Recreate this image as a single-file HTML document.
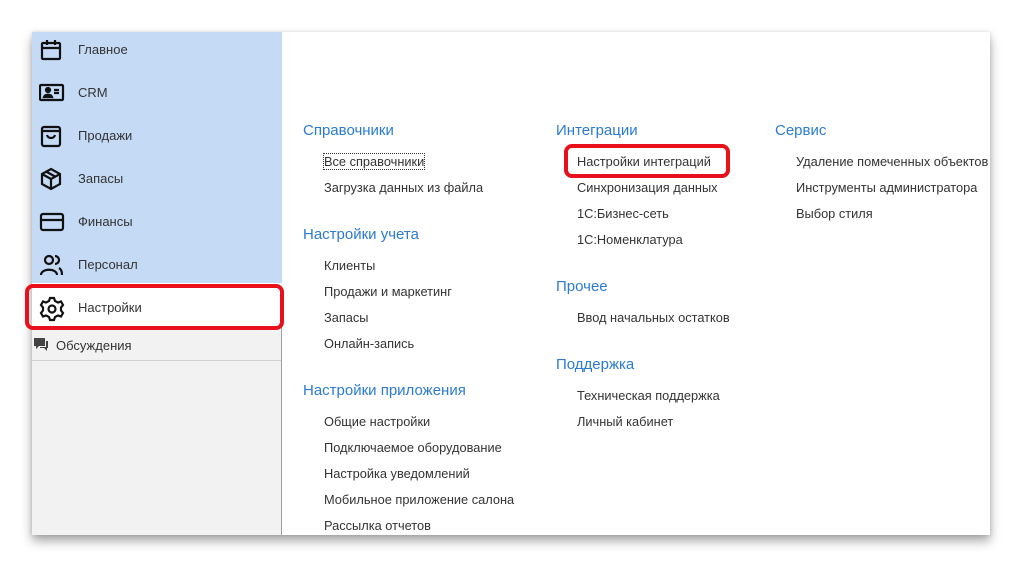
<!DOCTYPE html><html><head><meta charset="utf-8"><style>
body{margin:0;width:1022px;height:567px;background:#fff;font-family:"Liberation Sans",sans-serif;position:relative;overflow:hidden}
.win{position:absolute;left:32px;top:32px;width:958px;height:503px;background:#fff;box-shadow:0 6px 10px rgba(0,0,0,.35),0 0 4px rgba(0,0,0,.12)}
.side{position:absolute;left:0;top:0;width:249px;height:503px;background:#f2f2f2;border-right:1px solid #a0a0a0}
.blue{position:absolute;left:0;top:0;width:250px;height:251px;background:#c5daf5}
.it{position:absolute;left:0;width:250px;height:43px;font-size:13px;color:#333}
.it svg{position:absolute;left:7px;top:6px}
.it span{position:absolute;left:46px;top:10px}
.white{position:absolute;left:0;top:251px;width:250px;height:43px;background:#fff}
.red{position:absolute;border:4px solid #e8111b;border-radius:8px}
.h{position:absolute;font-size:15px;color:#2b7bd3}
.l{position:absolute;font-size:12.8px;color:#333}
</style></head><body>
<div class="win">
<div class="side">
<div class="blue"></div><div class="white"></div>
<div class="it" style="top:0"><svg width="24" height="24" fill="none" stroke="#111" stroke-width="2.2"><rect x="3" y="5" width="18" height="16" rx="1"/><path d="M3 10h18M8 2v5M16 2v5"/></svg><span>Главное</span></div>
<div class="it" style="top:43px"><svg width="26" height="24" fill="none" stroke="#111" stroke-width="2.2"><rect x="1" y="4" width="23" height="15" rx="1"/><circle cx="9" cy="9" r="2" fill="#111"/><path d="M5 16c1-3 7-3 8 0z" fill="#111"/><path d="M15 9h5M15 12h5"/></svg><span>CRM</span></div>
<div class="it" style="top:86px"><svg width="24" height="24" fill="none" stroke="#111" stroke-width="2.2"><rect x="3" y="3" width="18" height="19" rx="2"/><path d="M3 7h18M8 11c1 4 7 4 8 0"/></svg><span>Продажи</span></div>
<div class="it" style="top:129px"><svg width="24" height="24" fill="none" stroke="#111" stroke-width="2.2"><path d="M12 2l9 5v10l-9 5-9-5V7zM3 7l9 5 9-5M12 12v10M7 4.5l9 5"/></svg><span>Запасы</span></div>
<div class="it" style="top:172px"><svg width="26" height="24" fill="none" stroke="#111" stroke-width="2.2"><rect x="2" y="4" width="22" height="16" rx="2"/><path d="M2 10h22"/></svg><span>Финансы</span></div>
<div class="it" style="top:215px"><svg width="26" height="24" fill="none" stroke="#111" stroke-width="2.2"><circle cx="10" cy="7" r="4"/><path d="M2 22c0-7 16-7 16 0M16 3a4 4 0 010 8M20 15c2 1 3 3 3 7"/></svg><span>Персонал</span></div>
<div class="it" style="top:258px"><svg width="26" height="26" fill="none" stroke="#111" stroke-width="2.2"><circle cx="13" cy="13" r="3.5"/><path d="M11 2h4l1 3 3 1.5 3-1 2 3.5-2 2.5v3l2 2.5-2 3.5-3-1-3 1.5-1 3h-4l-1-3-3-1.5-3 1-2-3.5 2-2.5v-3l-2-2.5 2-3.5 3 1 3-1.5z"/></svg><span>Настройки</span></div>
<div style="position:absolute;left:0;top:304px;font-size:13px;color:#333"><svg width="16" height="16" style="position:absolute;left:1px;top:1px"><path d="M1 1h11v8H6l-3 3V9H1z" fill="#444"/><path d="M13 4h2v7h-1v3l-3-3H7v-1h6z" fill="#444"/></svg><span style="position:absolute;left:24px;top:2px;white-space:nowrap">Обсуждения</span></div>
<div style="position:absolute;left:0;top:328px;width:249px;height:1px;background:#d0d0d0"></div>
</div>
</div>
<div class="red" style="left:25px;top:284px;width:251px;height:38px"></div>
<div class="red" style="left:564px;top:144px;width:158px;height:26px"></div>
<div class="h" style="left:303px;top:122px">Справочники</div>
<div class="l" style="left:324px;top:154px;outline:1px dotted #333">Все справочники</div>
<div class="l" style="left:324px;top:180px">Загрузка данных из файла</div>
<div class="h" style="left:303px;top:226px">Настройки учета</div>
<div class="l" style="left:324px;top:258px">Клиенты</div>
<div class="l" style="left:324px;top:284px">Продажи и маркетинг</div>
<div class="l" style="left:324px;top:310px">Запасы</div>
<div class="l" style="left:324px;top:336px">Онлайн-запись</div>
<div class="h" style="left:303px;top:382px">Настройки приложения</div>
<div class="l" style="left:324px;top:414px">Общие настройки</div>
<div class="l" style="left:324px;top:440px">Подключаемое оборудование</div>
<div class="l" style="left:324px;top:466px">Настройка уведомлений</div>
<div class="l" style="left:324px;top:492px">Мобильное приложение салона</div>
<div class="l" style="left:324px;top:518px">Рассылка отчетов</div>
<div class="h" style="left:556px;top:122px">Интеграции</div>
<div class="l" style="left:577px;top:154px">Настройки интеграций</div>
<div class="l" style="left:577px;top:180px">Синхронизация данных</div>
<div class="l" style="left:577px;top:206px">1С:Бизнес-сеть</div>
<div class="l" style="left:577px;top:232px">1С:Номенклатура</div>
<div class="h" style="left:556px;top:278px">Прочее</div>
<div class="l" style="left:577px;top:310px">Ввод начальных остатков</div>
<div class="h" style="left:556px;top:356px">Поддержка</div>
<div class="l" style="left:577px;top:388px">Техническая поддержка</div>
<div class="l" style="left:577px;top:414px">Личный кабинет</div>
<div class="h" style="left:775px;top:122px">Сервис</div>
<div class="l" style="left:796px;top:154px">Удаление помеченных объектов</div>
<div class="l" style="left:796px;top:180px">Инструменты администратора</div>
<div class="l" style="left:796px;top:206px">Выбор стиля</div>
</body></html>
